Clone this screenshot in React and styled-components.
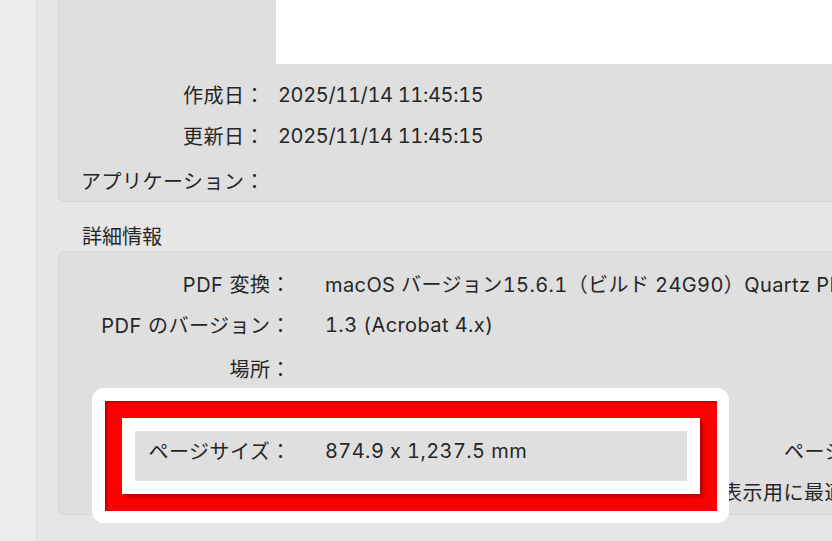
import styled, { createGlobalStyle } from "styled-components";

const GlobalStyle = createGlobalStyle`
  html, body {
    margin: 0;
    padding: 0;
    background: #e6e6e6;
    overflow: hidden;
  }
  * {
    box-sizing: border-box;
  }
`;

const Window = styled.div`
  position: relative;
  display: flex;
  width: 832px;
  height: 541px;
  overflow: hidden;
  background: #e6e6e6;
  color: #262626;
  font-family: Inter, "Noto Sans CJK JP", sans-serif;
  font-size: 20px;
`;

const Sidebar = styled.div`
  flex: 0 0 37px;
  background: #ededec;
  border-right: 1px solid #dadad9;
`;

const Main = styled.div`
  flex: 0 0 auto;
  width: 1000px;
  padding-left: 21px;
  display: flex;
  flex-direction: column;
`;

const Panel = styled.div`
  background: #dfdfdf;
  border: 1px solid #d6d6d6;
  border-right: none;
  border-radius: ${(p) => (p.$top ? "0 0 0 7px" : "7px 0 0 7px")};
  border-top: ${(p) => (p.$top ? "none" : "1px solid #d6d6d6")};
  padding: ${(p) => p.$pad};
`;

const Preview = styled.div`
  margin-left: 217px;
  height: 64px;
  background: #ffffff;
`;

const Row = styled.div`
  display: flex;
  align-items: center;
  height: 41px;
  margin-top: ${(p) => p.$gap || 0}px;
  white-space: nowrap;
`;

const Label = styled.span`
  flex: 0 0 ${(p) => p.$w}px;
  text-align: right;
  letter-spacing: 0.5px;
`;

const Value = styled.span`
  margin-left: ${(p) => p.$gap}px;
  font-variant-numeric: tabular-nums;
  letter-spacing: ${(p) => (p.$date ? "-0.35px" : "0.4px")};
`;

const SectionTitle = styled.div`
  height: 49px;
  display: flex;
  align-items: flex-end;
  padding: 0 0 2px 24px;
  line-height: 24px;
`;

const SplitGrid = styled.div`
  display: grid;
  grid-template-columns: 527px 300px;
  grid-auto-rows: 41px;
  margin-top: 41px;
`;

const Frame = styled.div`
  position: absolute;
  left: 92px;
  top: 388px;
  width: 637px;
  height: 135px;
  border-style: solid;
  border-color: #ffffff;
  border-width: 13px 12px 12px 13px;
  border-radius: 12px;
  pointer-events: none;
`;

const RedRing = styled.div`
  position: relative;
  width: 100%;
  height: 100%;
  border: 17px solid #ff0000;

  &::before {
    content: "";
    position: absolute;
    inset: -17px;
    box-shadow: inset 2px 2px 3px rgba(90, 0, 0, 0.45);
  }
`;

const InnerRing = styled.div`
  position: relative;
  width: 100%;
  height: 100%;
  border: 13px solid #ffffff;
  box-shadow: 3px 3px 4px rgba(90, 0, 0, 0.45);
`;

const App = () => {
  return (
    <>
      <GlobalStyle />
      <Window>
        <Sidebar />
        <Main>
          <Panel $top $pad="0 0 0 0">
            <Preview />
            <Row $gap={10}>
              <Label $w={206}>作成日：</Label>
              <Value $gap={13} $date>2025/11/14 11:45:15</Value>
            </Row>
            <Row>
              <Label $w={206}>更新日：</Label>
              <Value $gap={13} $date>2025/11/14 11:45:15</Value>
            </Row>
            <Row $gap={4}>
              <Label $w={206}>アプリケーション：</Label>
              <Value $gap={13}></Value>
            </Row>
          </Panel>

          <SectionTitle>詳細情報</SectionTitle>

          <Panel $pad="11px 0 2px 0">
            <Row>
              <Label $w={232}>PDF 変換：</Label>
              <Value $gap={34}>macOS バージョン15.6.1（ビルド 24G90）Quartz PDFContext</Value>
            </Row>
            <Row>
              <Label $w={232}>PDF のバージョン：</Label>
              <Value $gap={34}>1.3 (Acrobat 4.x)</Value>
            </Row>
            <Row $gap={3}>
              <Label $w={232}>場所：</Label>
              <Value $gap={34}></Value>
            </Row>
            <SplitGrid>
              <Row>
                <Label $w={232}>ページサイズ：</Label>
                <Value $gap={34}>874.9 x 1,237.5 mm</Value>
              </Row>
              <Row>
                <Label $w={300}>ページ数：</Label>
                <Value $gap={34}>1</Value>
              </Row>
              <Row />
              <Row>
                <Label $w={300}>高速Web表示用に最適化：</Label>
                <Value $gap={34}>はい</Value>
              </Row>
            </SplitGrid>
          </Panel>
        </Main>

        <Frame>
          <RedRing>
            <InnerRing />
          </RedRing>
        </Frame>
      </Window>
    </>
  );
};

export default App;
